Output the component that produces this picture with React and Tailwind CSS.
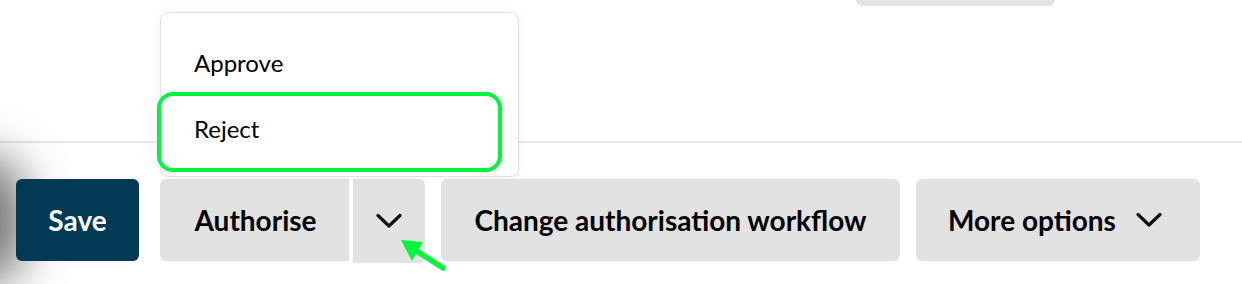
import React from "react";

function Chevron({ className = "" }) {
  return (
    <svg className={className} width="26" height="16" viewBox="0 0 26 16" fill="none">
      <path d="M2 2.5 L13 13 L24 2.5" stroke="#111" strokeWidth="3.2" strokeLinecap="round" strokeLinejoin="round" />
    </svg>
  );
}

export default function App() {
  return (
    <div className="relative w-[1242px] h-[284px] bg-white overflow-hidden" style={{ fontFamily: "Lato, 'Open Sans', sans-serif" }}>
      {/* left shadow from offscreen element */}
      <div className="absolute left-[-70px] top-[155px] w-[95px] h-[130px] rounded-full bg-black/55 blur-[24px]" />

      {/* top area */}
      <div className="h-[141px] flex">
        <div className="ml-[856px] w-[199px] h-[6px] bg-[#e3e3e3] rounded-b-[7px]" />
      </div>
      <div className="h-[2px] bg-[#e6e6e6]" />

      {/* button row */}
      <div className="relative flex items-start pl-[16px] pt-[36px]">
        <button className="w-[123px] h-[82px] rounded-[6px] bg-[#023a56] text-white text-[28px] font-bold flex items-center justify-center">
          Save
        </button>
        <div className="ml-[21px] flex items-start">
          <button className="w-[189px] h-[82px] rounded-l-[6px] bg-[#e2e2e2] text-black text-[28px] font-bold flex items-center justify-center pl-[2px]">
            Authorise
          </button>
          <button className="ml-[4px] w-[72px] h-[84px] rounded-r-[6px] bg-[#e2e2e2] flex items-center justify-center">
            <Chevron />
          </button>
        </div>
        <button className="ml-[16px] w-[459px] h-[82px] rounded-[6px] bg-[#e2e2e2] text-black text-[28px] font-bold flex items-center justify-center">
          Change authorisation workflow
        </button>
        <button className="ml-[16px] w-[284px] h-[82px] rounded-[6px] bg-[#e2e2e2] text-black text-[28px] font-bold flex items-center pl-[32px] gap-[20px]">
          <span>More options</span>
          <Chevron />
        </button>
      </div>

      {/* dropdown menu */}
      <div className="absolute left-[160px] top-[12px] w-[359px] h-[165px] bg-white border-[1.5px] border-[#e2e2e2] rounded-[8px] shadow-[0_0_12px_rgba(0,0,0,0.05)]">
        <div className="pl-[33px] pt-[38px] text-[24px] text-black leading-none">Approve</div>
        <div className="pl-[33px] pt-[42px] text-[24px] text-black leading-none">Reject</div>
      </div>

      {/* green highlight */}
      <div className="absolute left-[157px] top-[92px] w-[345px] h-[80px] rounded-[16px] border-[4px] border-[#00f53c]" />

      {/* green arrow */}
      <svg className="absolute left-[390px] top-[230px]" width="60" height="45" viewBox="0 0 60 45">
        <line x1="53" y1="38" x2="22" y2="18" stroke="#00f53c" strokeWidth="5.5" strokeLinecap="round" />
        <polygon points="11,10 33,12 22,31" fill="#00f53c" />
      </svg>
    </div>
  );
}
